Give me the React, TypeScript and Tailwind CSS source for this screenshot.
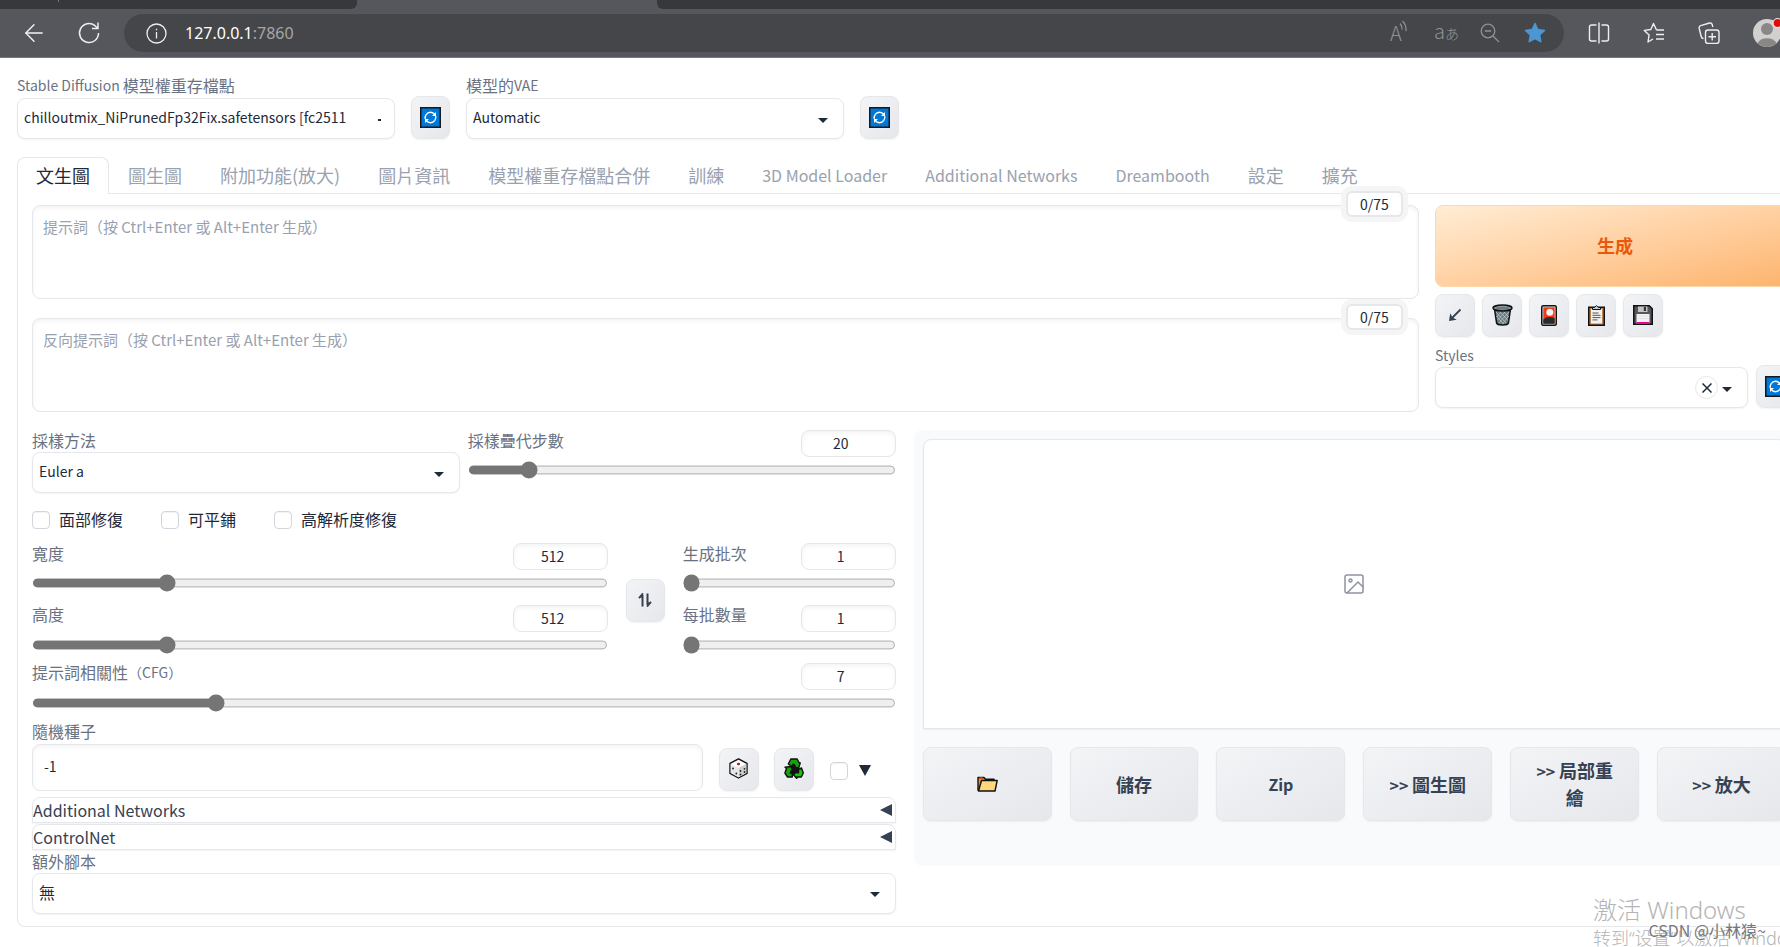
import React, { useState } from "react";
import { ArrowLeft } from "lucide-react";

const tabs = [
  "文生圖",
  "圖生圖",
  "附加功能(放大)",
  "圖片資訊",
  "模型權重存檔點合併",
  "訓練",
  "3D Model Loader",
  "Additional Networks",
  "Dreambooth",
  "設定",
  "擴充",
];

const isLatin = (text: string) => /^[\x20-\x7e]+$/.test(text);

/* ---------- icons ---------- */

const RefreshIcon = () => (
  <svg width="21" height="21" viewBox="0 0 21 21" fill="none" className="shrink-0">
    <rect x="0.75" y="0.75" width="19.5" height="19.5" fill="#0078d7" stroke="#15181c" strokeWidth="1.5" />
    <g stroke="#fff" strokeWidth="1.4">
      <path d="M6.2 7.6A5.2 5.200 0 0 1 14.800 7.600" />
      <path d="M14.800 13.400A5.200 5.200 0 0 1 6.200 13.400" />
      <path d="M5.300 11.800a5.300 5.300 0 0 1 .9-4.200M15.700 9.200a5.300 5.300 0 0 1-.9 4.200" />
    </g>
    <path d="M16 5v4h-4zM5 16v-4h4z" fill="#fff" />
  </svg>
);

const ArrowDownLeftIcon = () => (
  <svg width="14" height="14" viewBox="0 0 14 14" fill="none" stroke="#374151" strokeWidth="1.800">
    <path d="M12.500 1.500 4 10" />
    <path d="M1 13 2.200 5.200l2.300 4.200 4.300 2.300z" fill="#374151" stroke="none" />
  </svg>
);

const TrashIcon = () => (
  <svg width="21" height="22" viewBox="0 0 21 22" fill="none">
    <path d="M2.500 5 4.600 19c.2 1 3 1.900 5.900 1.900s5.700-.9 5.900-1.900L18.500 5z" fill="#69797e" stroke="#111" strokeWidth="1.500" />
    <g stroke="#b9c5ca" strokeWidth="0.800">
      <path d="m4 8 10 11M7 7l9 9.500M11 7l6 6M4.500 12l7 8M17 8 7 19M14 7 5.500 16M10 7l-5.500 6M16.500 12l-6 8" />
    </g>
    <ellipse cx="10.500" cy="4" rx="9.500" ry="2.900" fill="#8b9a9f" stroke="#111" strokeWidth="1.500" />
    <ellipse cx="10.500" cy="4.200" rx="6.800" ry="1.200" fill="#69797e" />
  </svg>
);

const CardIcon = () => (
  <svg width="16" height="21" viewBox="0 0 16 21">
    <rect x="0.750" y="0.750" width="14.500" height="19.500" rx="1.500" fill="#e8e8e8" stroke="#111" strokeWidth="1.500" />
    <rect x="2.300" y="2.300" width="11.400" height="16.400" fill="#f03a17" />
    <path d="M2.300 14.500c3-3 7-3.200 11.400-1.500v5.700H2.300z" fill="#2b2b2b" />
    <circle cx="8.800" cy="7.300" r="3.500" fill="#f2f2f2" />
  </svg>
);

const ClipboardIcon = () => (
  <svg width="17" height="21" viewBox="0 0 17 21">
    <rect x="0.750" y="2.250" width="15.500" height="18" fill="#c1814a" stroke="#111" strokeWidth="1.500" />
    <rect x="3" y="4" width="11" height="14.500" fill="#f2f2f2" />
    <path d="M4.500 4.500V2.500h2L8.500.600l2 1.900h2v2z" fill="#cccccc" stroke="#111" strokeWidth="1" />
    <path d="M4.500 8h6M4.500 10.300h8M4.500 12.600h8M4.500 14.900h5" stroke="#555" strokeWidth="1" />
  </svg>
);

const FloppyIcon = () => (
  <svg width="20" height="20" viewBox="0 0 20 20">
    <path d="M.750.750h15.500l3 3v15.500H.750z" fill="#55555a" stroke="#111" strokeWidth="1.500" />
    <rect x="5" y="1.500" width="9.500" height="5.500" fill="#c4c4c6" />
    <rect x="10.800" y="2" width="2.200" height="4" fill="#333" />
    <rect x="3.500" y="9" width="13" height="9.500" fill="#f2f2f2" />
    <path d="M4.500 11h11M4.500 13.500h11" stroke="#ddd" strokeWidth="0.800" />
    <rect x="3.500" y="17" width="13" height="1.800" fill="#e3008c" />
  </svg>
);

const DiceIcon = () => (
  <svg width="19" height="21" viewBox="0 0 19 21" strokeLinejoin="round">
    <path d="M9.500.900 18 5.400v10L9.500 20 1 15.400v-10z" fill="#fff" stroke="#111" strokeWidth="1.400" />
    <path d="M9.500 10 17.300 5.800v9.200L9.500 19.200z" fill="#cfcfcf" />
    <path d="M9.500 10 1.700 5.800v9.200l7.800 4.200z" fill="#e6e6e6" />
    <ellipse cx="9.500" cy="6" rx="1.600" ry="1.200" fill="#c50f1f" />
    <g fill="#222">
      <circle cx="4" cy="10.500" r="0.900" />
      <circle cx="7.300" cy="15.500" r="0.900" />
      <circle cx="11.500" cy="13" r="0.900" />
      <circle cx="15.500" cy="10.800" r="0.900" />
      <circle cx="11.500" cy="16.500" r="0.900" />
      <circle cx="15.500" cy="14" r="0.900" />
    </g>
  </svg>
);

const RecycleIcon = () => (
  <svg width="20" height="21" viewBox="0 0 20 21" fill="#16c60c" stroke="#111" strokeWidth="1.400" strokeLinejoin="round">
    <path d="M10 3 17.500 16.500H3z" fill="#111" />
    <path d="M6.800 1h6.400l1.800 3.500 1.200.500-1.500 5-5-1.200 1.300-1.300-1.500-1.500L7.800 8.500 4.300 6z" fill="#13a10e" />
    <path d="m14.500 11.500 3-1.500 1.800 5-2 4h-4.500v1.500L9.500 16.800l3.300-3.600v1.500h1.700z" />
    <path d="M2.500 10.500 1 9.300l6-.800 1.800 4.800-1.500-.500-1 2.200h2v4H3.500L.900 15z" fill="#13a10e" />
  </svg>
);

const FolderIcon = () => (
  <svg width="21" height="16" viewBox="0 0 21 16" strokeLinejoin="round">
    <path d="M1 14.800V1.500h6l1.500 1.700H17V6" fill="#e8912d" stroke="#111" strokeWidth="1.400" />
    <path d="M1.500 15 4.500 4.500h15.700L18 15z" fill="#ffd679" stroke="#111" strokeWidth="1.400" />
    <rect x="2.500" y="1.200" width="3" height="1.800" fill="#f03a17" />
  </svg>
);

const SwapIcon = () => (
  <svg width="14" height="14" viewBox="0 0 14 14" fill="none" stroke="#374151" strokeWidth="2">
    <path d="M4.500 13.500V2M1 5.200 4.200 1.500V5M9.500.500V12M13 8.800l-3.200 3.700V9" />
  </svg>
);

const ImageIcon = () => (
  <svg width="24" height="24" viewBox="0 0 24 24" fill="none" stroke="#9094a0" strokeWidth="1.500" strokeLinecap="round" strokeLinejoin="round">
    <rect x="3" y="3" width="18" height="18" rx="2" />
    <circle cx="8.500" cy="8.500" r="1.500" />
    <path d="m21 15-5-5L5 21" />
  </svg>
);

/* ---------- form parts ---------- */

type ToolButtonProps = {
  label: string;
  className?: string;
  children: React.ReactNode;
};

const ToolButton = ({ label, className = "w-10", children }: ToolButtonProps) => (
  <button
    type="button"
    aria-label={label}
    className={`${className} flex h-[43px] shrink-0 items-center justify-center rounded-lg border border-gray-200 bg-linear-to-br from-gray-100 to-gray-200 pb-px shadow-xs`}
  >
    {children}
  </button>
);

const Caret = () => (
  <span className="pointer-events-none absolute right-4 top-1/2 -mt-px border-x-[5px] border-t-[5px] border-x-transparent border-t-gray-800" />
);

type DropdownProps = {
  id: string;
  label: React.ReactNode;
  value: string;
  clipped?: boolean;
  tall?: boolean;
};

const Dropdown = ({ id, label, value, clipped, tall }: DropdownProps) => (
  <div className="min-w-0 flex-1">
    <label htmlFor={id} className={`${tall ? "h-6" : "h-[22px]"} flex items-center whitespace-pre pb-[2px] text-base leading-none text-gray-500`}>
      {label}
    </label>
    <div className="relative">
      <select
        id={id}
        defaultValue={value}
        className={`${isLatin(value) ? "text-sm" : "text-base"} block h-[41px] w-full appearance-none rounded-lg border border-gray-200 bg-white pb-[3px] pl-[6px] pr-12 text-gray-800 shadow-xs`}
      >
        <option>{value}</option>
      </select>
      {clipped ? (
        <span className="pointer-events-none absolute right-[14px] top-1/2 h-[2px] w-[3px] bg-gray-800" />
      ) : (
        <Caret />
      )}
    </div>
  </div>
);

type SliderProps = {
  id: string;
  label: React.ReactNode;
  initial: number;
  min: number;
  max: number;
};

const SliderField = ({ id, label, initial, min, max }: SliderProps) => {
  const [value, setValue] = useState(initial);
  return (
    <div className="h-[50px] min-w-0 flex-1">
      <div className="flex items-start justify-between">
        <label htmlFor={id} className="flex h-[22px] items-center pb-[3px] text-base leading-none text-gray-500">
          {label}
        </label>
        <input
          type="number"
          aria-label={id}
          value={value}
          onChange={(e) => setValue(Number(e.target.value))}
          className="h-[27px] w-[95px] rounded-lg border border-gray-200 bg-white px-2 pb-px text-center text-sm text-gray-800 inset-shadow-sm"
        />
      </div>
      <input
        id={id}
        type="range"
        min={min}
        max={max}
        value={value}
        onChange={(e) => setValue(Number(e.target.value))}
        className="mt-1 block h-4 w-full accent-[#757575] [zoom:1.1]"
      />
    </div>
  );
};

const CheckInput = ({ id, label }: { id: string; label?: string }) => (
  <input
    id={id}
    type="checkbox"
    aria-label={label}
    className="size-[18px] shrink-0 appearance-none rounded border border-gray-300 bg-white inset-shadow-xs checked:bg-blue-600"
  />
);

type PromptProps = { label: string; placeholder: string };

const PromptBox = ({ label, placeholder }: PromptProps) => (
  <div className="relative">
    <textarea
      aria-label={label}
      placeholder={placeholder}
      className="block h-[94px] w-full resize-none rounded-lg border border-gray-200 bg-white px-[10px] py-[9px] text-[15px] leading-6 text-gray-800 inset-shadow-sm placeholder:text-gray-400"
    />
    <span className="absolute -top-[14px] right-4 flex h-[26px] w-[57px] items-center justify-center rounded-md border-2 border-gray-200 bg-white text-sm text-gray-800 ring-[5px] ring-[#f5f5f5]">
      0/75
    </span>
  </div>
);

/* ---------- browser bar ---------- */

const BrowserBar = () => (
  <header className="relative h-[58px] overflow-hidden border-b border-[#77787c] bg-[#56575c]">
    <div className="flex h-[9px] justify-between">
      <div className="w-[357px] rounded-br-md bg-[#37383c]">
        <div className="ml-[58px] h-[2px] w-px bg-[#77787c]" />
      </div>
      <div className="ml-[300px] flex-1 rounded-bl-md bg-[#37383c]" />
    </div>
    <div className="flex h-12 items-center">
      <button type="button" aria-label="Back" className="ml-[22px] flex w-6 justify-center text-gray-100">
        <ArrowLeft size={28} strokeWidth={1.2} className="shrink-0" />
      </button>
      <button type="button" aria-label="Reload" className="ml-[31px] flex w-6 justify-center">
        <svg width="24" height="24" viewBox="0 0 24 24" fill="none" stroke="#eee" strokeWidth="1.500">
          <path d="M21.500 12A9.500 9.500 0 1 1 18 4.700L20.500 7M21 1.500V7.500H15" />
        </svg>
      </button>
      <div className="ml-[23px] flex h-[38px] flex-1 items-center rounded-full bg-[#454649] pl-[22px] pr-[18px]">
        <svg width="21" height="21" viewBox="0 0 21 21" fill="none" stroke="#eee" strokeWidth="1.300">
          <circle cx="10.500" cy="10.500" r="9.500" />
          <path d="M10.500 9v6.500M10.500 5.800v1.500" />
        </svg>
        <p className="ml-[18px] font-['Noto_Sans'] text-base text-white">
          127.0.0.1<span className="text-[#a5a5a7]">:7860</span>
        </p>
        <div className="ml-auto flex items-center text-[#919295]">
          <button type="button" aria-label="Read aloud" className="flex h-7 w-[22px] items-center">
            <span className="text-xl font-light leading-none">A</span>
            <svg width="10" height="14" viewBox="0 0 9 14" fill="none" stroke="#919295" strokeWidth="1.200" className="-ml-1 mb-3 shrink-0">
              <path d="M1.500 3.500q2.200 2.500 2 6M4 1q4 4 3.500 10" />
            </svg>
          </button>
          <button type="button" aria-label="Translate" className="ml-[22px] flex w-6 items-baseline pb-1 font-light leading-none">
            <span className="text-xl leading-none">a</span>
            <span className="text-sm leading-none">あ</span>
          </button>
          <button type="button" aria-label="Zoom out" className="ml-[22px] w-5">
            <svg width="20" height="20" viewBox="0 0 20 20" fill="none" stroke="#919295" strokeWidth="1.300">
              <circle cx="8" cy="8" r="6.800" />
              <path d="M4.800 8h6.400M13 13l6 6" />
            </svg>
          </button>
          <button type="button" aria-label="Favorite" className="ml-[24px] w-[22px]">
            <svg width="22" height="22" viewBox="0 0 22 22" fill="#4b97d2" stroke="#4b97d2" strokeWidth="1.500" strokeLinejoin="round">
              <path d="m11 1.500 2.800 6 6.700.900-4.900 4.600 1.200 6.700L11 16.500l-5.800 3.200 1.200-6.700L1.500 8.400l6.700-.900z" />
            </svg>
          </button>
        </div>
      </div>
      <div className="ml-[24px] flex w-[192px] items-center">
        <button type="button" aria-label="Split screen" className="w-[22px]">
          <svg width="22" height="22" viewBox="0 0 22 22" fill="none" stroke="#eee" strokeWidth="1.400">
            <path d="M8.500 3h-5a2 2 0 0 0-2 2v12a2 2 0 0 0 2 2h5M13.500 3h5a2 2 0 0 1 2 2v12a2 2 0 0 1-2 2h-5M11 .500v21" />
          </svg>
        </button>
        <button type="button" aria-label="Favorites" className="ml-[33px] w-[22px]">
          <svg width="22" height="22" viewBox="0 0 22 22" fill="none" stroke="#eee" strokeWidth="1.400" strokeLinejoin="round">
            <path d="M13.500 8 10.500 1.500 7.800 7.500l-6.500.900 4.800 4.500L5 20l5-3M13.500 8H21M13 12.500h8M13 17h8" />
          </svg>
        </button>
        <button type="button" aria-label="Collections" className="ml-[33px] w-[22px]">
          <svg width="22" height="22" viewBox="0 0 22 22" fill="none" stroke="#eee" strokeWidth="1.400" strokeLinejoin="round">
            <rect x="7.500" y="8" width="13.500" height="13.500" rx="2.500" />
            <path d="M14.200 11v7.500M10.500 14.700H18M5.500 16.500c-1.500 0-2-.700-2.300-2L1.200 6.500c-.300-1.500.200-2.500 1.500-2.900L11.500 1c1.500-.300 2.400.300 2.800 1.800l.500 2.200" />
          </svg>
        </button>
        <button type="button" aria-label="Profile" className="ml-[33px] w-7">
          <svg width="30" height="30" viewBox="0 0 30 30">
            <circle cx="14" cy="15" r="14" fill="#d2d0ce" />
            <circle cx="14" cy="11" r="6" fill="#8a8886" />
            <path d="M4.500 25.300a10 7.500 0 0 1 19 0A14 14 0 0 1 4.500 25.300z" fill="#8a8886" />
            <circle cx="24.500" cy="5" r="4.500" fill="#e00b0b" stroke="#fff" />
          </svg>
        </button>
      </div>
    </div>
  </header>
);

/* ---------- page ---------- */

const GenerationSettings = () => (
  <div className="flex min-w-0 flex-col">
    <div className="flex gap-2">
      <Dropdown id="sampler" label="採樣方法" value="Euler a" />
      <SliderField id="steps" label="採樣疊代步數" initial={20} min={1} max={150} />
    </div>

    <div className="mt-[15px] flex h-6 items-center gap-[38px] text-base text-gray-800">
      {["面部修復", "可平鋪", "高解析度修復"].map((option) => (
        <div key={option} className="flex items-center gap-[9px]">
          <CheckInput id={option} />
          <label htmlFor={option} className="pb-[2px]">
            {option}
          </label>
        </div>
      ))}
    </div>

    <div className="mt-[11px] flex items-center gap-[18px]">
      <div className="flex min-w-0 flex-1 flex-col gap-[13px]">
        <SliderField id="width" label="寬度" initial={512} min={64} max={2048} />
        <SliderField id="height" label="高度" initial={512} min={64} max={2048} />
      </div>
      <div className="pt-1">
        <ToolButton label="Swap width and height" className="w-[39px]">
          <SwapIcon />
        </ToolButton>
      </div>
      <div className="flex w-[213px] flex-col gap-[13px]">
        <SliderField id="batch-count" label="生成批次" initial={1} min={1} max={100} />
        <SliderField id="batch-size" label="每批數量" initial={1} min={1} max={8} />
      </div>
    </div>

    <div className="mt-[9px] flex">
      <SliderField
        id="cfg"
        label={
          <>
            提示詞相關性<span className="text-sm">（CFG）</span>
          </>
        }
        initial={7}
        min={1}
        max={30}
      />
    </div>

    <div className="mt-[9px] flex items-end">
      <div className="min-w-0 flex-1">
        <label htmlFor="seed" className="flex h-[22px] items-center pb-[3px] text-base leading-none text-gray-500">
          隨機種子
        </label>
        <input
          id="seed"
          type="text"
          defaultValue="-1"
          className="block h-[47px] w-full rounded-lg border border-gray-200 bg-white px-[11px] pb-[3px] text-sm text-gray-800 inset-shadow-sm"
        />
      </div>
      <div className="ml-4 flex w-[177px] items-center">
        <ToolButton label="Random seed">
          <DiceIcon />
        </ToolButton>
        <div className="ml-[15px]">
          <ToolButton label="Reuse seed">
            <RecycleIcon />
          </ToolButton>
        </div>
        <div className="ml-4 flex items-center gap-[11px] pt-[3px]">
          <CheckInput id="seed-extra" />
          <label htmlFor="seed-extra" aria-label="Extra" className="border-x-[6px] border-t-[11px] border-x-transparent border-t-gray-800" />
        </div>
      </div>
    </div>

    <div className="mt-[6px] flex flex-col gap-px">
      {["Additional Networks", "ControlNet"].map((name) => (
        <button
          key={name}
          type="button"
          className="flex h-[26px] items-center justify-between rounded-t-lg border border-gray-200 pr-[3px] text-base text-gray-700 shadow-xs"
        >
          {name}
          <span className="border-y-[6px] border-r-[12px] border-y-transparent border-r-gray-700" />
        </button>
      ))}
    </div>

    <div className="mt-px flex">
      <Dropdown id="script" label="額外腳本" value="無" />
    </div>
  </div>
);

const OutputPanel = () => (
  <div className="min-w-0 self-start rounded-lg bg-gray-50 px-[9px] pb-[45px] pt-[9px]">
    <div className="flex h-[290px] items-center justify-center rounded-t-lg border border-gray-200 bg-white shadow-xs">
      <ImageIcon />
    </div>
    <div className="mt-[18px] grid grid-cols-6 gap-[18px]">
      {["folder", "儲存", "Zip", "圖生圖", "局部重繪", "放大"].map((name, index) => (
        <button
          key={name}
          type="button"
          aria-label={name}
          className="flex h-[74px] items-center justify-center rounded-lg border border-gray-200 bg-linear-to-br from-gray-100 to-gray-200 px-5 text-lg font-bold leading-[27px] text-gray-700 shadow-xs"
        >
          {name === "folder" ? (
            <FolderIcon />
          ) : (
            <span className={isLatin(name) ? "text-base" : ""}>
              {index > 2 && <span className="text-base">&gt;&gt; </span>}
              {name}
            </span>
          )}
        </button>
      ))}
    </div>
  </div>
);

const App = () => {
  const [activeTab, setActiveTab] = useState(tabs[0]);

  return (
    <div
      lang="zh-Hant"
      className="relative min-h-screen overflow-hidden bg-white font-['Noto_Sans_CJK_TC','Noto_Sans_CJK_SC',sans-serif]"
    >
      <BrowserBar />

      <main className="w-[calc(100%+47px)] px-[17px] pb-5 pt-4">
        <div className="flex items-end gap-4">
          <div className="flex w-[378px]">
            <Dropdown
              id="checkpoint"
              label={
                <>
                  <span className="text-sm leading-none">Stable Diffusion </span>模型權重存檔點
                </>
              }
              value="chilloutmix_NiPrunedFp32Fix.safetensors [fc2511"
              clipped
              tall
            />
          </div>
          <ToolButton label="Refresh checkpoints" className="w-[39px]">
            <RefreshIcon />
          </ToolButton>
          <div className="flex w-[378px]">
            <Dropdown
              id="vae"
              label={
                <>
                  模型的<span className="text-sm leading-none">VAE</span>
                </>
              }
              value="Automatic"
              tall
            />
          </div>
          <ToolButton label="Refresh VAE" className="w-[39px]">
            <RefreshIcon />
          </ToolButton>
        </div>

        <nav className="mt-[18px] flex h-[37px] border-b border-gray-200">
          {tabs.map((tab) => (
            <button
              key={tab}
              type="button"
              onClick={() => setActiveTab(tab)}
              className={`${
                tab === activeTab
                  ? "border-gray-200 bg-white text-gray-800"
                  : "border-transparent text-gray-400"
              } ${isLatin(tab) ? "text-base" : "text-lg"} h-[37px] whitespace-nowrap rounded-t-lg border border-b-0 px-[18px] pb-[3px] leading-none`}
            >
              {tab}
            </button>
          ))}
        </nav>

        <section className="rounded-b-lg border border-t-0 border-gray-200 px-[14px] pb-3 pt-[11px]">
          <div className="flex gap-4">
            <div className="flex min-w-0 flex-1 flex-col gap-[19px]">
              <PromptBox label="提示詞" placeholder="提示詞（按 Ctrl+Enter 或 Alt+Enter 生成）" />
              <PromptBox label="反向提示詞" placeholder="反向提示詞（按 Ctrl+Enter 或 Alt+Enter 生成）" />
            </div>

            <div className="w-[360px] shrink-0">
              <button
                type="button"
                className="block h-[82px] w-full rounded-lg border border-orange-200 bg-linear-to-br from-[#ffedd5] to-[#fdb36b] pb-[3px] text-lg font-bold text-[#ea580c]"
              >
                生成
              </button>
              <div className="mt-[7px] flex gap-[7px]">
                <ToolButton label="Read parameters"><ArrowDownLeftIcon /></ToolButton>
                <ToolButton label="Clear prompt"><TrashIcon /></ToolButton>
                <ToolButton label="Extra networks"><CardIcon /></ToolButton>
                <ToolButton label="Apply styles"><ClipboardIcon /></ToolButton>
                <ToolButton label="Save style"><FloppyIcon /></ToolButton>
              </div>
              <div className="mt-[6px] flex items-end gap-2">
                <div className="min-w-0 flex-1">
                  <label htmlFor="styles" className="flex h-6 items-center text-sm text-gray-500">
                    Styles
                  </label>
                  <div className="relative">
                    <input
                      id="styles"
                      type="text"
                      className="block h-[41px] w-full rounded-lg border border-gray-200 bg-white px-2 text-sm text-gray-800 shadow-xs"
                    />
                    <button
                      type="button"
                      aria-label="Clear styles"
                      className="absolute right-[30px] top-[9px] flex size-[23px] items-center justify-center rounded-full border border-gray-200"
                    >
                      <svg width="10" height="10" viewBox="0 0 10 10" stroke="#1f2937" strokeWidth="1.500">
                        <path d="m.500.500 9 9M9.500.500l-9 9" />
                      </svg>
                    </button>
                    <Caret />
                  </div>
                </div>
                <ToolButton label="Refresh styles" className="w-[39px]">
                  <RefreshIcon />
                </ToolButton>
              </div>
            </div>
          </div>

          <div className="mt-[18px] grid grid-cols-[49fr_50fr] gap-[18px]">
            <GenerationSettings />
            <OutputPanel />
          </div>
        </section>
      </main>

      <div className="pointer-events-none absolute left-[calc(100%-187px)] top-[892px] whitespace-nowrap font-['Noto_Sans','Noto_Sans_CJK_SC',sans-serif] font-light text-[#b4b4b4]">
        <p className="text-2xl leading-9">激活 Windows</p>
        <p className="text-lg leading-5">转到“设置”以激活 Windows。</p>
      </div>
      <p className="pointer-events-none absolute right-[14px] top-[918px] font-['Noto_Sans_CJK_SC',sans-serif] text-base leading-6 text-[#77787c]">
        CSDN @小林猿~
      </p>
    </div>
  );
};

export default App;
